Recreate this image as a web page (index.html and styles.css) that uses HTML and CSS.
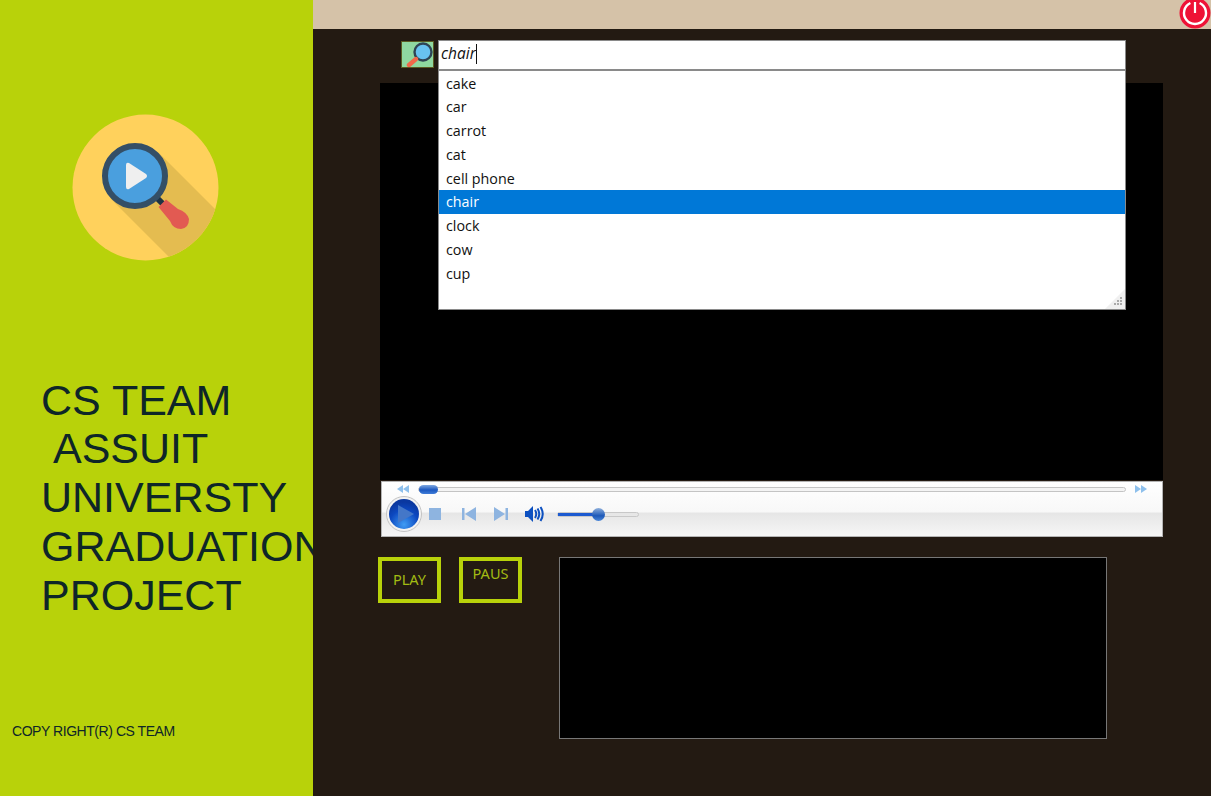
FILE: index.html
```html
<!DOCTYPE html>
<html>

<head>
  <meta charset="utf-8">
  <title>CS Team video search</title>
  <link rel="stylesheet" href="styles.css">
</head>
<body>
  <aside class="side">
    <svg class="logo" width="148" height="148" viewBox="72 114 148 148">
      <defs><clipPath id="disc"><circle cx="145.5" cy="187.5" r="73"/></clipPath></defs>
      <circle cx="145.5" cy="187.5" r="73" fill="#ffd15c"/>
      <polygon points="159,153 240,234 240,280 192,280 112,200" fill="#e4bc50" clip-path="url(#disc)"/>
      <line x1="157" y1="198" x2="163" y2="204" stroke="#1f3344" stroke-width="6"/>
      <path d="M158.500 207 L166 199.500 L178 209 Q187 212 189 219 Q189 228 181 229 Q173 229 170 221 Z" fill="#e25a52"/>
      <circle cx="135" cy="176" r="30" fill="#4a9fde" stroke="#344f66" stroke-width="6"/>
      <path d="M126 165 Q126 162 129 163 L146 174 Q148 176 146 178 L129 189 Q126 190 126 187 Z" fill="#efefef"/>
    </svg>
    <h1 class="title">CS TEAM<br>&nbsp;ASSUIT<br>UNIVERSTY<br>GRADUATION<br>PROJECT</h1>
    <p class="copy">COPY RIGHT(R) CS TEAM</p>
  </aside>

  <main class="main">
    <div class="topbar">
      <svg width="32" height="29" viewBox="0 0 32 29">
        <circle cx="16" cy="13" r="15.500" fill="#ee1236"/>
        <path d="M11.400 3 A11 11 0 1 0 20.600 3" fill="none" stroke="#fff" stroke-width="2.400"/>
        <line x1="16" y1="2" x2="16" y2="13" stroke="#fff" stroke-width="2.200"/>
      </svg>
    </div>

    <div class="search">
      <div class="search-icon">
        <svg width="31" height="25" viewBox="0 0 31 25">
          <circle cx="21" cy="10" r="8.500" fill="#68c2f0" stroke="#2f4454" stroke-width="2.400"/>
          <line x1="14" y1="17" x2="7" y2="23" stroke="#f0684a" stroke-width="4.400" stroke-linecap="round"/>
        </svg>
      </div>
      <div class="combo">
        <div class="input"><i>chair</i><span class="caret"></span></div>
        <ul class="list">
          <li>cake</li>
          <li>car</li>
          <li>carrot</li>
          <li>cat</li>
          <li>cell phone</li>
          <li class="sel">chair</li>
          <li>clock</li>
          <li>cow</li>
          <li>cup</li>
          <svg class="grip" width="20" height="20" viewBox="0 0 20 20">
            <polygon points="20,0 20,20 0,20" fill="#f0f0f0"/>
            <g fill="#aaa">
              <rect x="15" y="8" width="2" height="2"/>
              <rect x="12" y="11" width="2" height="2"/><rect x="15" y="11" width="2" height="2"/>
              <rect x="9" y="14" width="2" height="2"/><rect x="12" y="14" width="2" height="2"/><rect x="15" y="14" width="2" height="2"/>
            </g>
          </svg>
        </ul>
      </div>
    </div>

    <div class="video"></div>

    <div class="player">
      <div class="seek">
        <svg class="tiny" width="12" height="8" viewBox="0 0 12 8"><path d="M6 0V8L0 4ZM12 0V8L6 4Z" fill="#8ec0ec"/></svg>
        <div class="track"><span class="thumb"></span></div>
        <svg class="tiny" width="12" height="8" viewBox="0 0 12 8"><path d="M0 0V8L6 4ZM6 0V8L12 4Z" fill="#8ec0ec"/></svg>
      </div>
      <div class="controls">
        <svg width="36" height="36" viewBox="0 0 36 36">
          <defs>
            <radialGradient id="ball" cx="50%" cy="85%" r="75%">
              <stop offset="0" stop-color="#3f9cf4"/><stop offset="0.65" stop-color="#0c48c0"/><stop offset="1" stop-color="#0a38a0"/>
            </radialGradient>
          </defs>
          <circle cx="18" cy="18" r="17.500" fill="#f3f3f3" stroke="#c4c4c4"/>
          <circle cx="18" cy="18" r="15" fill="url(#ball)"/>
          <path d="M12 9 L28 18 L12 27 Z" fill="#4477c8"/>
        </svg>
        <span class="stop"></span>
        <svg class="prev" width="14" height="14" viewBox="0 0 14 14"><path d="M0 1H2.500V13H0ZM14 0V14L3 7Z" fill="#8eb4e0"/></svg>
        <svg class="next" width="14" height="14" viewBox="0 0 14 14"><path d="M14 1H11.500V13H14ZM0 0V14L11 7Z" fill="#8eb4e0"/></svg>
        <svg class="speaker" width="20" height="16" viewBox="0 0 20 16">
          <path d="M0 5H3L8 0V16L3 11H0Z" fill="#0c50c0"/>
          <g fill="none" stroke="#0c50c0" stroke-width="2">
            <path d="M10 4Q12.500 8 10 12"/><path d="M12.500 2.500Q16 8 12.500 13.500"/><path d="M15.500 1Q20 8 15.500 15"/>
          </g>
        </svg>
        <div class="volume"><span class="vol-fill"></span><span class="vol-knob"></span></div>
      </div>
    </div>

    <div class="bottom">
      <button class="btn">PLAY</button>
      <button class="btn btn-high">PAUS</button>
      <div class="preview"></div>
    </div>
  </main>
</body>
</html>
```
FILE: styles.css
```css
html, body { margin: 0; height: 100%; }
body { display: flex; height: 796px; overflow: hidden; background: #231a12; font-family: "Liberation Sans", Arial, sans-serif; }

.side { width: 313px; flex: none; background: #b8d20a; color: #0e2628; overflow: hidden; box-sizing: border-box; padding-top: 114px; }
.logo { display: block; margin-left: 72px; }
.title { margin: 113.500px 0 0 41px; font-size: 43px; line-height: 48.800px; font-weight: normal; white-space: nowrap; }
.copy { margin: 102.500px 0 0 12px; font-size: 14px; line-height: 18px; letter-spacing: -0.450px; }

.main { flex: 1; min-width: 0; }
.topbar { height: 29px; background: #d5c2a8; display: flex; justify-content: flex-end; overflow: hidden; }

.search { height: 54px; box-sizing: border-box; padding: 11px 0 0 88px; display: flex; align-items: flex-start; gap: 4px; }
.search-icon { width: 33px; height: 27px; margin-top: 1px; box-sizing: border-box; background: #8fd8a0; border: 1px solid #5b5a22; }
.search-icon svg { display: block; }
.combo { position: relative; width: 688px; }
.input { height: 31px; box-sizing: border-box; background: #fff; border: 1px solid #8a8a8a; border-bottom-width: 2px; padding: 0 0 3px 2px; font: 15.500px/25px "Open Sans", sans-serif; color: #111; display: flex; align-items: center; }
.caret { width: 1px; height: 20px; background: #111; }
.list { position: absolute; z-index: 2; top: 31px; left: 0; right: 0; height: 239px; box-sizing: border-box; margin: 0; padding: 0; list-style: none; background: #fff; border: 1px solid #8a8a8a; border-top: 0; font: 14.300px/22.250px "Open Sans", sans-serif; color: #111; }
.list li { padding: 1.500px 0 0 7px; }
.list .sel { background: #0078d7; color: #fff; }
.grip { position: absolute; right: 0; bottom: 0; }

.video { height: 397px; width: 783px; margin: 0 0 1px 67px; background: #000; }

.player { width: 782px; height: 56px; margin-left: 68px; box-sizing: border-box; border: 1px solid #b4b4b4; background: linear-gradient(#fff, #f8f8f8 55%, #e6e6e6 58%, #f6f6f6); }
.seek { height: 14px; display: flex; align-items: center; padding: 0 15px 0 15px; gap: 9px; }
.tiny { flex: none; }
.track { flex: 1; height: 3px; border: 1px solid #c4c4c4; border-radius: 3px; background: #f4f4f4; position: relative; }
.thumb { position: absolute; left: 0; top: -3px; width: 19px; height: 9px; border-radius: 5px; background: linear-gradient(#7fa8e0, #1c58c0 55%, #3f7cd8); }
.controls { display: flex; align-items: center; height: 36px; padding-left: 4px; }
.stop { width: 12px; height: 12px; margin-left: 7px; background: #8eb4e0; }
.prev { margin-left: 21px; }
.next { margin-left: 18px; }
.speaker { margin-left: 17px; }
.volume { position: relative; width: 80px; height: 3px; margin-left: 12px; border: 1px solid #c8c8c8; border-radius: 3px; box-sizing: content-box; }
.vol-fill { position: absolute; left: 0; top: 0; width: 41px; height: 3px; background: #1c5ad0; }
.vol-knob { position: absolute; left: 34px; top: -5px; width: 13px; height: 13px; border-radius: 50%; background: linear-gradient(#8fb0dc, #1c58b8 60%, #4a86d8); }

.bottom { display: flex; align-items: flex-start; margin: 20px 0 0 65px; }
.btn { width: 63px; height: 46px; padding: 0 0 2px; margin-right: 18px; box-sizing: border-box; background: none; border: 4px solid #b8d20a; color: #a3bc12; font: 14.500px "Noto Sans", sans-serif; }
.btn-high { padding-bottom: 14px; margin-right: 37px; }
.preview { width: 548px; height: 182px; box-sizing: border-box; background: #000; border: 1px solid #777; }
```
